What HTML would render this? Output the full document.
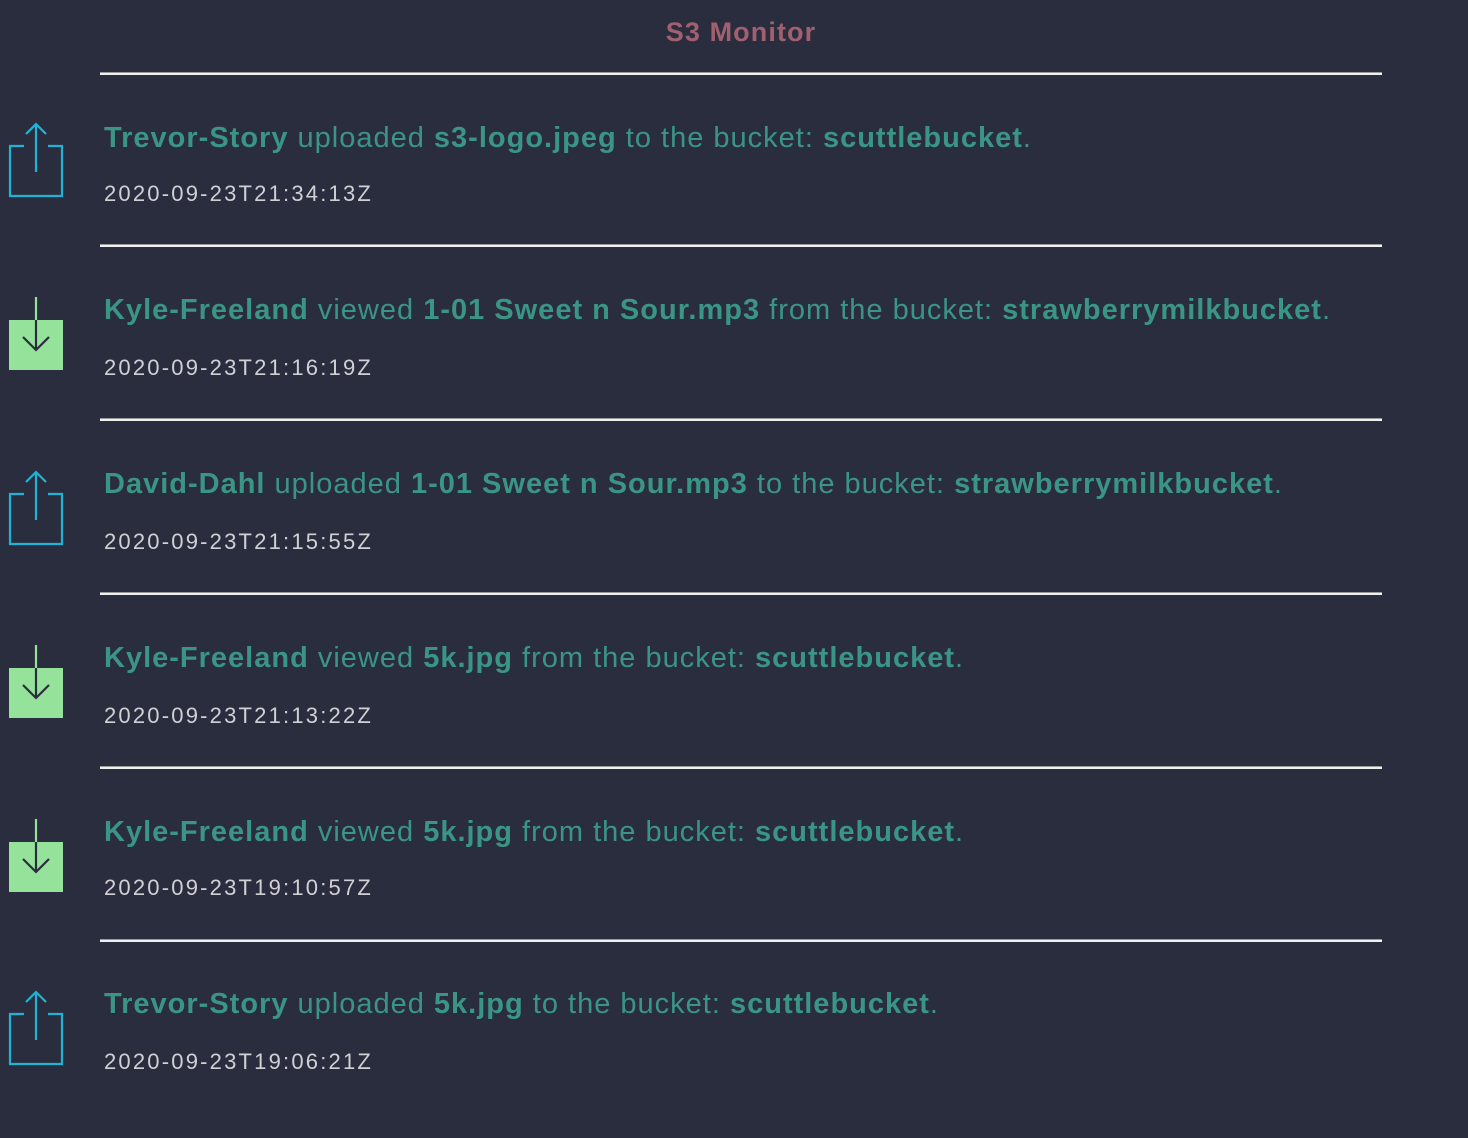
<!DOCTYPE html>
<html><head><meta charset="utf-8"><style>
body{margin:0;background:#2a2d3e;width:1468px;height:1138px;overflow:hidden;font-family:"Liberation Sans",sans-serif;position:relative}
.h{position:absolute;left:0;width:1482px;top:14px;text-align:center;color:#a1606f;font-weight:bold;font-size:27px;line-height:36px;letter-spacing:1.1px}
.ln{position:absolute;left:100px;width:1282px;height:1px;background:#9a9a9a;border-bottom:2px solid #f0f0f0}
.t{position:absolute;left:104px;color:#3a9587;font-size:29px;line-height:36px;white-space:nowrap;letter-spacing:1px}
.t b{font-weight:bold}
.d{position:absolute;left:104px;color:#d0d0d5;font-size:22px;line-height:28px;letter-spacing:2.2px}
svg{position:absolute;left:0}
</style></head><body>
<div class="h">S3 Monitor</div>
<div class="ln" style="top:72px"></div>
<div class="ln" style="top:244px"></div>
<div class="ln" style="top:418px"></div>
<div class="ln" style="top:592px"></div>
<div class="ln" style="top:766px"></div>
<div class="ln" style="top:939px"></div>

<svg style="top:120px" width="70" height="80"><path d="M24 26H10V76H62V26H48M36 52V4M26 14L36 4L46 14" fill="none" stroke="#1fb3d5" stroke-width="2.2"/></svg>
<div class="t" style="top:120px"><b>Trevor-Story</b> uploaded <b>s3-logo.jpeg</b> to the bucket: <b>scuttlebucket</b>.</div>
<div class="d" style="top:180px">2020-09-23T21:34:13Z</div>

<svg style="top:294px" width="70" height="80"><rect x="9" y="26" width="54" height="50" fill="#95e29b"/><path d="M36 3V26" stroke="#95e29b" stroke-width="2.2"/><path d="M36 26V56M23 43L36 56L49 43" fill="none" stroke="#2a2d3e" stroke-width="2.2"/></svg>
<div class="t" style="top:292px"><b>Kyle-Freeland</b> viewed <b>1-01 Sweet n Sour.mp3</b> from the bucket: <b>strawberrymilkbucket</b>.</div>
<div class="d" style="top:354px">2020-09-23T21:16:19Z</div>

<svg style="top:468px" width="70" height="80"><path d="M24 26H10V76H62V26H48M36 52V4M26 14L36 4L46 14" fill="none" stroke="#1fb3d5" stroke-width="2.2"/></svg>
<div class="t" style="top:466px"><b>David-Dahl</b> uploaded <b>1-01 Sweet n Sour.mp3</b> to the bucket: <b>strawberrymilkbucket</b>.</div>
<div class="d" style="top:528px">2020-09-23T21:15:55Z</div>

<svg style="top:642px" width="70" height="80"><rect x="9" y="26" width="54" height="50" fill="#95e29b"/><path d="M36 3V26" stroke="#95e29b" stroke-width="2.2"/><path d="M36 26V56M23 43L36 56L49 43" fill="none" stroke="#2a2d3e" stroke-width="2.2"/></svg>
<div class="t" style="top:640px"><b>Kyle-Freeland</b> viewed <b>5k.jpg</b> from the bucket: <b>scuttlebucket</b>.</div>
<div class="d" style="top:702px">2020-09-23T21:13:22Z</div>

<svg style="top:816px" width="70" height="80"><rect x="9" y="26" width="54" height="50" fill="#95e29b"/><path d="M36 3V26" stroke="#95e29b" stroke-width="2.2"/><path d="M36 26V56M23 43L36 56L49 43" fill="none" stroke="#2a2d3e" stroke-width="2.2"/></svg>
<div class="t" style="top:814px"><b>Kyle-Freeland</b> viewed <b>5k.jpg</b> from the bucket: <b>scuttlebucket</b>.</div>
<div class="d" style="top:874px">2020-09-23T19:10:57Z</div>

<svg style="top:988px" width="70" height="80"><path d="M24 26H10V76H62V26H48M36 52V4M26 14L36 4L46 14" fill="none" stroke="#1fb3d5" stroke-width="2.2"/></svg>
<div class="t" style="top:986px"><b>Trevor-Story</b> uploaded <b>5k.jpg</b> to the bucket: <b>scuttlebucket</b>.</div>
<div class="d" style="top:1048px">2020-09-23T19:06:21Z</div>
</body></html>
